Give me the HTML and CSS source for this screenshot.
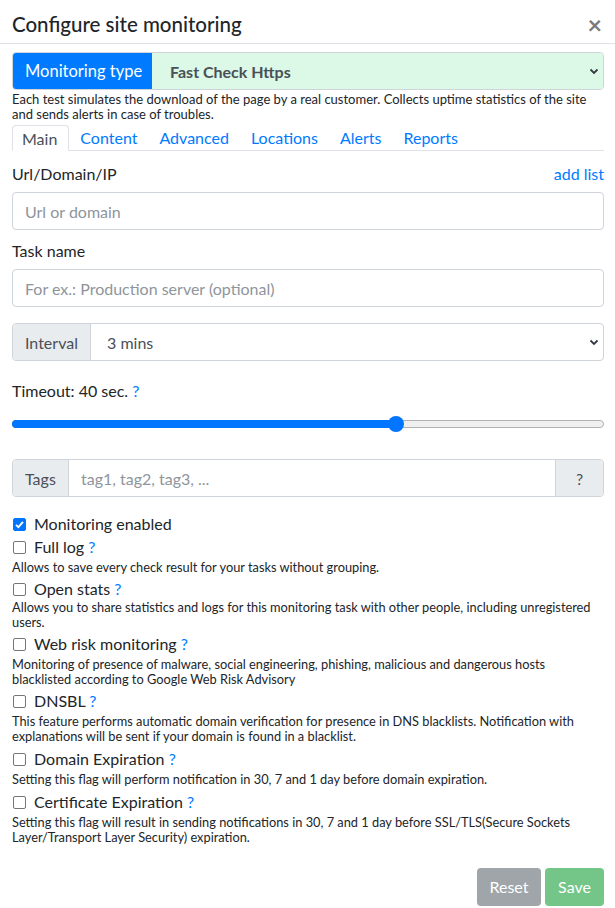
FILE: index.html
```html
<!DOCTYPE html>
<html>
<head>
<meta charset="utf-8">
<link rel="stylesheet" href="styles.css">
</head>
<body>
<div class="modal">
  <div class="modal-header">
    <h5 class="title">Configure site monitoring</h5>
    <span class="close">×</span>
  </div>
  <div class="modal-body">
    <div class="type-group">
      <span class="type-label">Monitoring type</span>
      <div class="type-select">
        <span>Fast Check Https</span>
        <svg class="chev" width="10" height="8" viewBox="0 0 10 8"><path d="M1.5 2.5 L5 6 L8.5 2.5" fill="none" stroke="#343a40" stroke-width="1.8"/></svg>
      </div>
    </div>
    <p class="type-desc">Each test simulates the download of the page by a real customer. Collects uptime statistics of the site and sends alerts in case of troubles.</p>
    <ul class="tabs">
      <li class="tab active">Main</li>
      <li class="tab">Content</li>
      <li class="tab">Advanced</li>
      <li class="tab">Locations</li>
      <li class="tab">Alerts</li>
      <li class="tab">Reports</li>
    </ul>
    <div class="label-row first">
      <span>Url/Domain/IP</span>
      <a class="link">add list</a>
    </div>
    <div class="input"><span class="ph">Url or domain</span></div>
    <div class="label-row"><span>Task name</span></div>
    <div class="input"><span class="ph">For ex.: Production server (optional)</span></div>

    <div class="group interval">
      <span class="addon">Interval</span>
      <div class="group-field select">
        <span>3 mins</span>
        <svg class="chev" width="10" height="8" viewBox="0 0 10 8"><path d="M1.5 2.5 L5 6 L8.5 2.5" fill="none" stroke="#343a40" stroke-width="1.8"/></svg>
      </div>
    </div>

    <div class="timeout">Timeout: 40 sec. <a class="link">?</a></div>
    <div class="range">
      <div class="range-fill" style="width: 64.86%"></div>
      <div class="range-thumb" style="left: 64.86%"></div>
    </div>

    <div class="group tags">
      <span class="addon">Tags</span>
      <div class="group-field"><span class="ph">tag1, tag2, tag3, ...</span></div>
      <span class="addon addon-right">?</span>
    </div>

    <div class="checks">
      <div class="check first"><span class="box checked"><svg width="13" height="13" viewBox="0 0 13 13"><path d="M3 6.8 L5.4 9.2 L10 3.8" fill="none" stroke="#fff" stroke-width="1.8"/></svg></span><span>Monitoring enabled</span></div>
      <div class="check tight"><span class="box"></span><span>Full log <a class="link">?</a></span></div>
      <p class="help">Allows to save every check result for your tasks without grouping.</p>
      <div class="check mid"><span class="box"></span><span>Open stats <a class="link">?</a></span></div>
      <p class="help flush">Allows you to share statistics and logs for this monitoring task with other people, including unregistered users.</p>
      <div class="check"><span class="box"></span><span>Web risk monitoring <a class="link">?</a></span></div>
      <p class="help">Monitoring of presence of malware, social engineering, phishing, malicious and dangerous hosts blacklisted according to Google Web Risk Advisory</p>
      <div class="check"><span class="box"></span><span>DNSBL <a class="link">?</a></span></div>
      <p class="help">This feature performs automatic domain verification for presence in DNS blacklists. Notification with explanations will be sent if your domain is found in a blacklist.</p>
      <div class="check wide"><span class="box"></span><span>Domain Expiration <a class="link">?</a></span></div>
      <p class="help">Setting this flag will perform notification in 30, 7 and 1 day before domain expiration.</p>
      <div class="check wide"><span class="box"></span><span>Certificate Expiration <a class="link">?</a></span></div>
      <p class="help">Setting this flag will result in sending notifications in 30, 7 and 1 day before SSL/TLS(Secure Sockets Layer/Transport Layer Security) expiration.</p>
    </div>

    <div class="actions">
      <button class="btn reset">Reset</button>
      <button class="btn save">Save</button>
    </div>
  </div>
</div>
</body>
</html>
```
FILE: styles.css
```css
* { box-sizing: border-box; }
html, body {
  margin: 0;
  padding: 0;
  background: #fff;
}
body {
  font-family: Lato, "Open Sans", sans-serif;
  color: #212529;
  font-size: 16px;
}
.modal {
  width: 615px;
}
.modal-header {
  display: flex;
  align-items: center;
  justify-content: space-between;
  height: 44px;
  padding: 5px 13px 0 12px;
  border-bottom: 1px solid #dee2e6;
}
.title {
  margin: 0;
  font-size: 20.5px;
  font-weight: 500;
  line-height: 30px;
  color: #212529;
}
.close {
  font-size: 25px;
  font-weight: 700;
  color: #7a7a7a;
  line-height: 1;
}
.modal-body {
  padding: 8px 11px 0 12px;
}
.type-group {
  display: flex;
  height: 38px;
  border: 1px solid #ced4da;
  border-radius: 4px;
  overflow: hidden;
}
.type-label {
  background: #007bff;
  color: #fff;
  display: flex;
  align-items: center;
  padding: 0 0 0 13px;
  width: 140px;
  margin: -1px 0 -1px -1px;
  white-space: nowrap;
  font-size: 16.5px;
}
.type-select {
  flex: 1;
  background: #dcf8e6;
  display: flex;
  align-items: center;
  justify-content: space-between;
  padding: 0 4px 0 18px;
  font-weight: 700;
  color: #495057;
}
.chev { display: block; }
.type-desc {
  margin: 2px 0 0 0;
  font-size: 13px;
  line-height: 15px;
}
.tabs {
  list-style: none;
  margin: 3px 0 0 0;
  padding: 0;
  display: flex;
  border-bottom: 1px solid #dee2e6;
  height: 26px;
}
.tab {
  padding: 0 11px;
  color: #007bff;
  line-height: 25px;
}
.tab.active {
  color: #495057;
  border: 1px solid #dee2e6;
  border-bottom-color: #fff;
  border-radius: 4px 4px 0 0;
  padding: 0 11px 0 9px;
  height: 26px;
}
.link { color: #007bff; text-decoration: none; }
.label-row {
  display: flex;
  justify-content: space-between;
  margin-top: 9px;
  line-height: 24px;
  height: 24px;
}
.label-row.first { margin-top: 11px; }
.input {
  margin-top: 6px;
  height: 38px;
  border: 1px solid #ced4da;
  border-radius: 4px;
  display: flex;
  align-items: center;
  padding: 0 12px;
}
.ph { color: #8e959c; }
.group {
  display: flex;
  height: 38px;
  border: 1px solid #ced4da;
  border-radius: 4px;
  overflow: hidden;
}
.interval { margin-top: 16px; }
.addon {
  background: #e9ecef;
  color: #495057;
  display: flex;
  align-items: center;
  padding: 0 12px;
  border-right: 1px solid #ced4da;
}
.addon-right {
  border-right: none;
  border-left: 1px solid #ced4da;
  width: 48px;
  justify-content: center;
  padding: 0;
}
.interval .addon { width: 78px; }
.tags .addon:first-child { width: 56px; }
.group-field {
  flex: 1;
  display: flex;
  align-items: center;
  padding: 0 12px;
  color: #495057;
}
.group-field.select {
  justify-content: space-between;
  padding: 0 4px 0 16px;
}
.timeout {
  margin-top: 18px;
  line-height: 24px;
}
.range {
  position: relative;
  margin-top: 17px;
  height: 8px;
  border: 1px solid #b2b2b2;
  border-radius: 4px;
  background: #efefef;
}
.range-fill {
  position: absolute;
  left: -1px;
  top: -1px;
  bottom: -1px;
  background: #0075ff;
  border-radius: 4px;
}
.range-thumb {
  position: absolute;
  top: 50%;
  width: 16px;
  height: 16px;
  margin: -8px 0 0 -8px;
  border-radius: 50%;
  background: #0075ff;
}
.tags { margin-top: 31px; }
.checks { margin-top: 15px; }
.check {
  display: flex;
  align-items: center;
  height: 23px;
  line-height: 23px;
  margin-top: 2px;
}
.check.first, .check.tight { margin-top: 0; }
.check.mid { margin-top: 1.5px; }
.check.wide { margin-top: 3px; }
.box {
  width: 13px;
  height: 13px;
  border: 1px solid #767676;
  border-radius: 2px;
  margin: 2px 8px 0 1px;
  display: inline-block;
  flex: none;
}
.box.checked {
  background: #0075ff;
  border-color: #0075ff;
  position: relative;
}
.box.checked svg {
  position: absolute;
  left: -1px;
  top: -1px;
}
.help {
  margin: 2px 0 0 0;
  font-size: 12.8px;
  line-height: 15px;
}
.help.flush { margin-top: 0; }
.actions {
  display: flex;
  justify-content: flex-end;
  gap: 4px;
  margin-top: 23px;
}
.btn {
  font-family: inherit;
  font-size: 16px;
  height: 38px;
  border: none;
  border-radius: 4px;
  color: #fff;
  padding: 0;
}
.reset { background: #a0a5aa; width: 64px; }
.save { background: #73c687; width: 59px; }
```
